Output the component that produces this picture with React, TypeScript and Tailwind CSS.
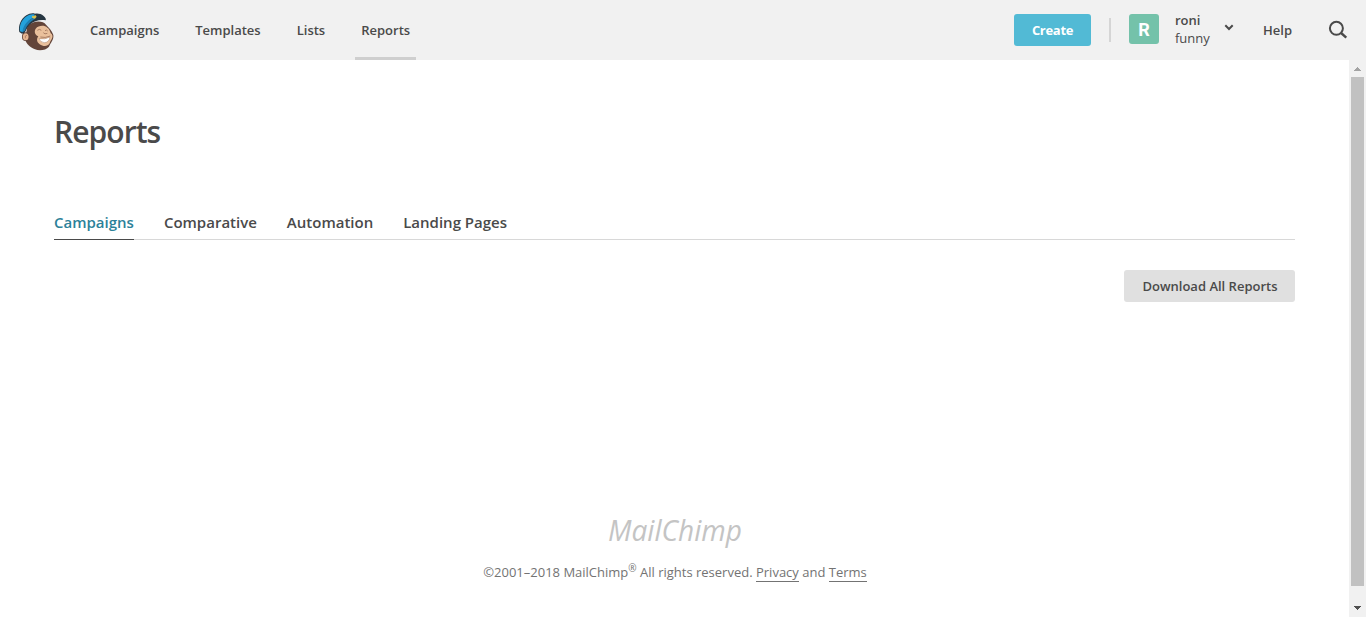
function Freddie() {
  return (
    <svg viewBox="45 30 126 126" className="h-[42px] w-[42px]" aria-hidden="true">
      <path d="M82 80C96 62 128 60 138 74C146 82 156 92 160 105C162 119 152 128 147 140C138 151 118 153 105 148C90 142 79 132 75 118Z" fill="#634439" />
      <path d="M107 86C116 75 134 75 142 83C150 86 149 97 155 102C162 112 152 119 149 130C143 141 129 140 119 133C110 126 109 117 115 109C104 104 102 94 107 86Z" fill="#eac09c" />
      <ellipse cx="77" cy="110" rx="11" ry="13" fill="#634439" />
      <ellipse cx="77" cy="110" rx="8.5" ry="10.5" fill="#e6b692" />
      <path d="M81 106Q74 105 76 115" stroke="#a97960" strokeWidth="2.5" fill="none" />
      <path d="M66 101L58 96C54 78 62 57 79 46C88 40 98 38 105 41C112 39 124 41 130 47C136 52 139 57 137 61C119 58 100 64 89 74C81 81 79 91 74 98Z" fill="#263642" />
      <path d="M60 94C57 77 65 59 80 49C87 44 97 41 104 44L103 52C87 59 72 75 69 97Z" fill="#24a2dc" />
      <path d="M67 97C69 77 82 60 101 53L106 56C91 64 80 75 75 92Z" fill="#1d7eb3" />
      <path d="M96 47l5 2 5-4 4 5-5 6-8-2z" fill="#dcc04a" />
      <path d="M112 91q6-6 12 0M135 92q5-4 8 1M130 98q4 6 12 2M121 111Q135 115 151 108" stroke="#8b5d49" strokeWidth="2" fill="none" />
      <path d="M117 116Q135 119 150 111Q148 127 133 128Q121 127 117 116Z" fill="#fff" stroke="#9b705b" strokeWidth="1.3" />
    </svg>
  );
}

const navItems = ["Campaigns", "Templates", "Lists"];
const tabs = ["Comparative", "Automation", "Landing Pages"];

export default function App() {
  return (
    <div className="flex h-[618px] w-[1366px] flex-col overflow-hidden bg-white font-['Open_Sans',sans-serif] text-[#4a4a4a]">
      <header className="flex h-[60px] shrink-0 bg-[#f1f1f1] text-[13px] font-semibold">
        <div className="ml-[15px] mt-[10px] w-[69px]">
          <Freddie />
        </div>
        <nav className="flex h-[60px] gap-6 leading-[60px]">
          {navItems.map((item) => (
            <a key={item} className="px-1.5">{item}</a>
          ))}
          <a className="h-[60px] border-b-[3px] border-[#cfcfcf] px-1.5">Reports</a>
        </nav>
        <div className="ml-auto flex">
          <button className="mt-[14px] h-8 w-[77px] rounded-[3px] bg-[#52bad5] pt-px font-bold tracking-[-0.3px] text-white">Create</button>
          <div className="ml-[18px] mt-[18px] h-6 w-0.5 bg-[#d5d5d5]" />
          <div className="ml-[18px] mt-[14px] flex h-[30px] w-[30px] items-center justify-center rounded-[3px] bg-[#74c2aa] pt-px font-['Roboto',sans-serif] text-[18px] font-bold text-white">R</div>
          <div className="ml-4 mt-[11px] w-[49px] leading-[18px]">
            <div>roni</div>
            <div className="font-normal">funny</div>
          </div>
          <svg viewBox="0 0 10 7" className="mt-6 h-[7px] w-[10px]" fill="none" stroke="#4a4a4a" strokeWidth="2">
            <path d="M1.3 1.3L5 5L8.7 1.3" />
          </svg>
          <span className="ml-[29px] w-[65px] leading-[60px]">Help</span>
          <svg viewBox="0 0 20 20" className="mr-[18px] mt-5 h-5 w-5" fill="none" stroke="#4a4a4a" strokeWidth="2">
            <circle cx="8.4" cy="8.3" r="6.5" />
            <path d="M13.1 13L18.3 17.7" strokeWidth="2.4" />
          </svg>
        </div>
      </header>
      <div className="flex h-[557px]">
        <main className="flex w-[1349px] flex-col px-[54px]">
          <h1 className="mt-[52px] text-[30px] font-semibold leading-10 tracking-[-0.95px]">Reports</h1>
          <div className="mt-[54px] flex h-[34px] gap-[30px] border-b border-[#d8d8d8] text-[15px] font-semibold leading-[33px]">
            <a className="h-[34px] border-b border-[#4a4a4a] text-[#2c8199]">Campaigns</a>
            {tabs.map((tab) => (
              <a key={tab}>{tab}</a>
            ))}
          </div>
          <button className="mt-[30px] h-8 w-[171px] self-end rounded-[3px] bg-[#e0e0e0] pl-px pt-px text-[13px] font-semibold">Download All Reports</button>
          <footer className="mt-[206px] flex flex-col items-center">
            <svg viewBox="0 0 144 48" className="h-12 w-[144px] overflow-visible" role="img" aria-label="MailChimp">
              <text x="5" y="33" textLength="134" lengthAdjust="spacingAndGlyphs" className="fill-[#c4c4c4] font-['Open_Sans',sans-serif] text-[29px] font-normal italic">MailChimp</text>
            </svg>
            <p className="mt-[7px] whitespace-nowrap pl-px text-[13px] leading-[18px] text-[#737373]">
              ©2001–2018 MailChimp<sup className="text-[10px]">®</sup> All rights reserved.{" "}
              <a className="border-b border-[#737373]">Privacy</a> and <a className="border-b border-[#737373]">Terms</a>
            </p>
          </footer>
        </main>
        <aside className="flex w-[17px] flex-col items-center bg-[#f1f1f1]">
          <svg viewBox="0 0 17 17" className="h-[17px] w-[17px]" fill="#a3a3a3" shapeRendering="crispEdges">
            <path d="M5 11h7v-1h-1V9h-1V8H9V7H8v1H7v1H6v1H5z" />
          </svg>
          <div className="h-[509px] w-[13px] bg-[#c1c1c1]" />
          <svg viewBox="0 0 17 17" className="mt-auto h-[17px] w-[17px]" fill="#505050" shapeRendering="crispEdges">
            <path d="M5 6h7v1h-1v1h-1v1H9v1H8V9H7V8H6V7H5z" />
          </svg>
        </aside>
      </div>
    </div>
  );
}
